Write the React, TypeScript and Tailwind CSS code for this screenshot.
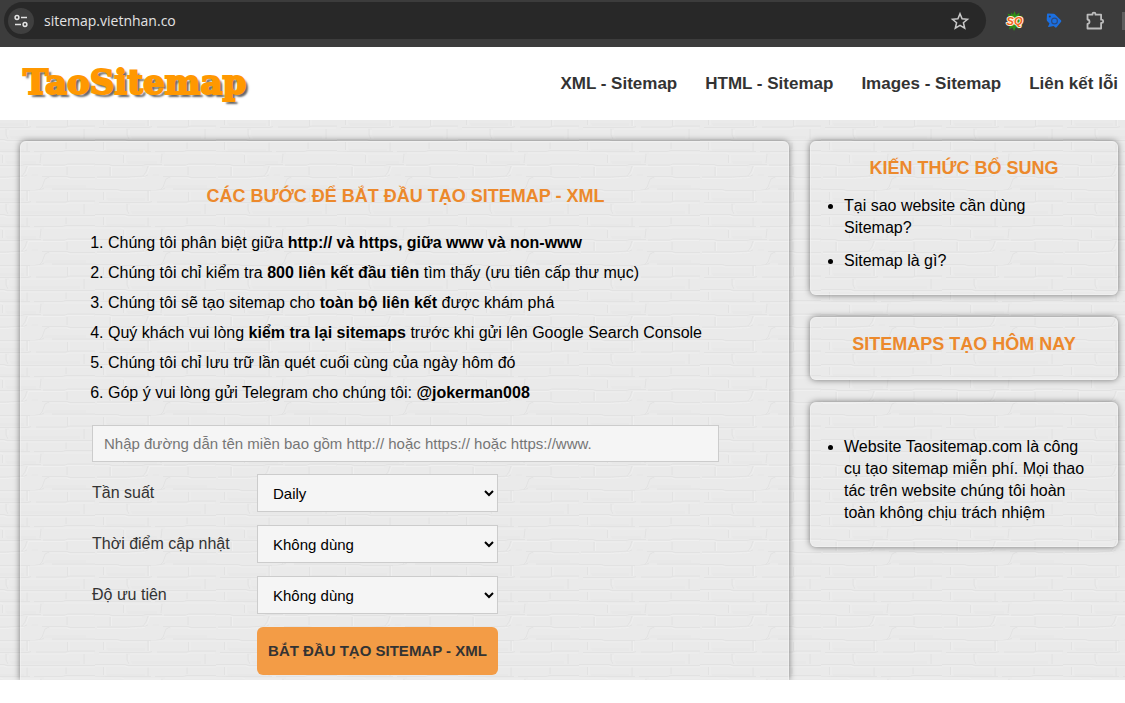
import { type ReactNode } from "react";

const navLinks = ["XML - Sitemap", "HTML - Sitemap", "Images - Sitemap", "Liên kết lỗi"];

const fields = [
  { id: "frequency", label: "Tần suất", options: ["Daily", "Weekly", "Monthly"] },
  { id: "lastmod", label: "Thời điểm cập nhật", options: ["Không dùng"] },
  { id: "priority", label: "Độ ưu tiên", options: ["Không dùng"] },
];

function BrickWall() {
  return (
    <svg className="absolute inset-0 size-full" aria-hidden="true">
      <defs>
        <pattern id="bricks" x="95" y="32" width="121" height="75" patternUnits="userSpaceOnUse">
          <rect width="121" height="75" fill="#eaeaea" />
          <g fill="none" stroke="#dedede" strokeWidth="1" opacity="0.7">
            <path d="M0 12.5h14l3 1h30l4-1h16M69 13h22l3-1h27" />
            <path d="M2 25h30l18-1 3-1M68 24.5h25l3 1h25" />
            <path d="M0 37.5h22l4 1h34l6-1 4-1M78 37h43" />
            <path d="M4 50.5h50l3-1M62 50h30l4-1h25" />
            <path d="M0 62.5h30l3 1h88" />
            <path d="M0 75l16-.5h40M60 74.500h28l4-1h29" />
            <path d="M28.500 3v8M67 2l-1 9M15 14v10M53 14l-2 6-3 4M93 15v8" />
            <path d="M75 25l-4 2-3 8-2 2M8.500 40v8M53 39v10M93.500 40v9M32 52v6l2 4M110 52v10" />
            <path d="M8.500 65v8M53 65v9M92 65v7" />
          </g>
          <g fill="none" stroke="#f1f1f1" strokeWidth="1" opacity="0.7">
            <path d="M0 14h14l3 1h30M54 14.500h36l3-1h27" />
            <path d="M2 26.500h30l18-1M76 26h17l3 1h25" />
            <path d="M0 39h22l4 1h26M56 39h65" />
            <path d="M4 52h27M35 52h56l4-1h25" />
            <path d="M0 64h30l3 1h88M0 1h26l4 1h36M70 1h51" />
            <path d="M30 3v8M54.500 15l-2 6-3 3M16.500 15v9M10 40v8M54.500 39v10M95 40v8M10 65v8M34 53v5" />
          </g>
          <g fill="#e5e5e5" opacity="0.5">
            <path d="M32 9h30v3H33zM58 22h6v2h-7zM72 33h40v3H68zM12 46h38v3H13zM36 59h70v3H37zM12 72h38v2H12z" />
          </g>
        </pattern>
      </defs>
      <rect width="100%" height="100%" fill="url(#bricks)" />
    </svg>
  );
}

function BrowserBar() {
  return (
    <div className="flex h-[47px] items-start bg-[#3c3c3c] pl-1 pt-0.5">
      <div className="flex h-[37px] flex-1 items-center rounded-full bg-[#282828] pl-1 pr-4">
        <button type="button" aria-label="Site information" className="flex size-[26px] items-center justify-center rounded-full bg-[#3f3f3f]">
          <svg width="14" height="14" viewBox="0 0 14 14" fill="none" stroke="#e3e3e3" strokeWidth="1.5">
            <circle cx="3" cy="3.500" r="1.900" />
            <path d="M7 3.500h6M1 10.500h6" />
            <circle cx="11" cy="10.500" r="1.900" />
          </svg>
        </button>
        <input
          aria-label="Address"
          defaultValue="sitemap.vietnhan.co"
          className="ml-[10px] min-w-0 flex-1 bg-transparent font-['Open_Sans','Noto_Sans',sans-serif] text-sm text-[#e3e3e3] outline-none"
        />
        <button type="button" aria-label="Bookmark">
          <svg width="20" height="20" viewBox="0 0 20 20" fill="none" stroke="#c9c9c9" strokeWidth="1.500">
            <path d="M10 2.800l2.100 5 5.400.5-4.100 3.500 1.300 5.300L10 14.300l-4.700 2.800 1.300-5.300L2.500 8.300l5.400-.5z" />
          </svg>
        </button>
      </div>
      <div className="flex h-[37px] items-center pl-[19px]">
        <button type="button" aria-label="SQ" className="mr-5">
          <svg width="20" height="20" viewBox="0 0 20 20">
            <path d="M9.500 0l1.500 4 3.500-2.500-.3 4 3.300-1-2 5.500 2 5.500-3.500-1 .5 4-3.500-2.500L9 20l-1.500-3.500L4 18.500l.8-4 .2-4-1-4.500-1.500-3.500L6 4l.5-2.500L8 4z" fill="#2f8f16" />
            <text
              x="9.500"
              y="14"
              textAnchor="middle"
              fontSize="11"
              fontWeight="900"
              fontStyle="italic"
              fontFamily="Liberation Sans, sans-serif"
              fill="#f4661b"
              stroke="#fff3e2"
              strokeWidth="2"
              strokeLinejoin="round"
              paintOrder="stroke"
            >
              SQ
            </text>
          </svg>
        </button>
        <button type="button" aria-label="Tag" className="mr-[22px]">
          <svg width="18" height="18" viewBox="0 0 18 18">
            <path d="M2.800 1.600l5.900.2q.8 0 1.400.6l5.900 5.800q.7.700.1 1.500l-4.500 5.500q-.7.800-1.500.1L8.600 14l-5 .9q-.7.100-.4-.6l1.300-2.900-2.400-2.500q-.5-.6-.4-1.300l.3-5.200q0-.8.800-.8z" fill="#1b6fe0" />
            <circle cx="4.800" cy="4.600" r="1" fill="#3c3c3c" />
            <circle cx="9.500" cy="9" r="2.900" fill="none" stroke="#2a4a80" strokeWidth="1.200" />
          </svg>
        </button>
        <button type="button" aria-label="Extensions" className="mr-[17px]">
          <svg width="20" height="20" viewBox="0 0 20 20" fill="none" stroke="#bdbdbd" strokeWidth="1.800" strokeLinejoin="round">
            <path d="M2.500 3.700h5v-.6q0-1.500 1.500-1.500t1.500 1.500v.6h5.600v5h.6q1.500 0 1.500 1.600t-1.500 1.600h-.6v5.600H2.500v-4.600q2-.3 2-2.200t-2-2.200z" />
          </svg>
        </button>
        <span className="h-[18px] w-[3px] bg-[#5e5e5e]" />
      </div>
    </div>
  );
}

function Panel({ title, children }: { title?: string; children?: ReactNode }) {
  return (
    <section className="rounded-md border border-[#f4f4f4]/60 px-4 pb-[22px] pt-[13px] shadow-[0_0_6px_rgba(0,0,0,0.5)]">
      {title && <h2 className="text-center text-lg leading-[26px] font-bold text-[#ec892c]">{title}</h2>}
      {children}
    </section>
  );
}

export default function App() {
  return (
    <div className="min-h-screen bg-white font-['Liberation_Sans',Arial,sans-serif] text-black">
      <BrowserBar />
      <header className="flex h-[73px] items-center justify-between bg-white pl-[23px] pr-[7px]">
        <a
          href="#"
          className="pb-1 font-['DejaVu_Serif',serif] text-[34px] leading-10 font-bold text-[#ff9800] [-webkit-text-stroke:2px_#ff9800] [text-shadow:3px_3px_2px_#666]"
        >
          TaoSitemap
        </a>
        <nav className="flex gap-7">
          {navLinks.map((link) => (
            <a key={link} href="#" className="text-[17px] font-bold text-[#333]">
              {link}
            </a>
          ))}
        </nav>
      </header>

      <div className="relative overflow-hidden">
        <BrickWall />
        <div className="relative flex gap-[21px] pl-5 pr-[7px] pt-[21px]">
          <main className="min-w-0 flex-1 rounded-t-md border border-b-0 border-[#f4f4f4]/60 pb-[5px] pl-[71px] pr-[69px] pt-[41px] shadow-[0_0_6px_rgba(0,0,0,0.5)]">
            <h1 className="text-center text-lg leading-[26px] font-bold text-[#ec892c]">
              CÁC BƯỚC ĐỂ BẮT ĐẦU TẠO SITEMAP - XML
            </h1>
            <ol className="mt-[19px] list-decimal pl-4 text-base leading-[30px]">
              <li>Chúng tôi phân biệt giữa <b>http:// và https, giữa www và non-www</b></li>
              <li>Chúng tôi chỉ kiểm tra <b>800 liên kết đầu tiên</b> tìm thấy (ưu tiên cấp thư mục)</li>
              <li>Chúng tôi sẽ tạo sitemap cho <b>toàn bộ liên kết</b> được khám phá</li>
              <li>Quý khách vui lòng <b>kiểm tra lại sitemaps</b> trước khi gửi lên Google Search Console</li>
              <li>Chúng tôi chỉ lưu trữ lần quét cuối cùng của ngày hôm đó</li>
              <li>Góp ý vui lòng gửi Telegram cho chúng tôi: <b>@jokerman008</b></li>
            </ol>
            <form className="mt-[17px]" onSubmit={(e) => e.preventDefault()}>
              <input
                type="text"
                aria-label="Tên miền"
                placeholder="Nhập đường dẫn tên miền bao gồm http:// hoặc https:// hoặc https://www."
                className="block h-[37px] w-full border border-[#ccc] bg-[#f5f5f5] px-[11px] text-[15px] placeholder:text-[#757575]"
              />
              <div className="mt-3 flex flex-col gap-[13px]">
                {fields.map((field) => (
                  <div key={field.id} className="flex items-center">
                    <label htmlFor={field.id} className="w-[165px] text-base text-[#333]">
                      {field.label}
                    </label>
                    <select id={field.id} className="h-[38px] w-[241px] border border-[#ccc] bg-[#f5f5f5] pl-[11px] text-[15px]">
                      {field.options.map((option) => (
                        <option key={option}>{option}</option>
                      ))}
                    </select>
                  </div>
                ))}
                <button type="submit" className="ml-[165px] h-12 w-[241px] rounded-md bg-[#f39c46] text-[15px] font-bold whitespace-nowrap text-[#333]">
                  BẮT ĐẦU TẠO SITEMAP - XML
                </button>
              </div>
            </form>
          </main>

          <aside className="flex w-[308px] shrink-0 flex-col gap-[22px] text-base leading-[22px]">
            <Panel title="KIẾN THỨC BỔ SUNG">
              <ul className="mt-[14px] list-disc space-y-[11px] pl-[17px] pr-10">
                <li><a href="#">Tại sao website cần dùng Sitemap?</a></li>
                <li><a href="#">Sitemap là gì?</a></li>
              </ul>
            </Panel>
            <Panel title="SITEMAPS TẠO HÔM NAY" />
            <Panel>
              <ul className="mt-5 list-disc pl-[17px] pr-2">
                <li>
                  Website Taositemap.com là công cụ tạo sitemap miễn phí. Mọi thao tác trên website chúng tôi hoàn
                  toàn không chịu trách nhiệm
                </li>
              </ul>
            </Panel>
          </aside>
        </div>
      </div>
    </div>
  );
}
